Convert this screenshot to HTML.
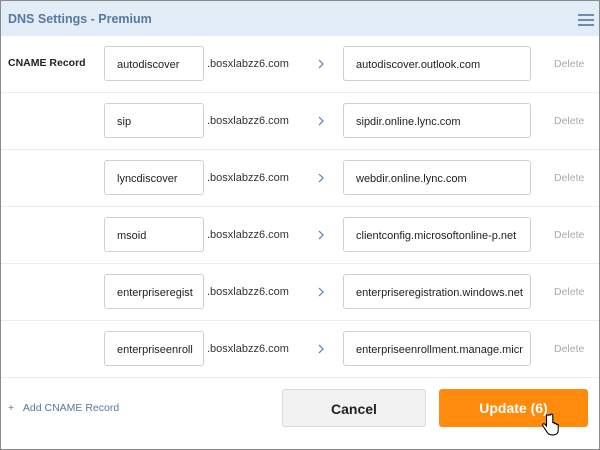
<!DOCTYPE html>
<html><head><style>
body{margin:0;width:600px;height:450px;overflow:hidden;font-family:"Liberation Sans",Arial,sans-serif;background:#fff}
.frame{position:absolute;left:0;top:0;width:598px;height:448px;border:1px solid #8a8a8a;background:#fff}
.hdr{position:absolute;left:0;top:0;width:598px;height:35px;background:#e3edf8;}
.hdr span{position:absolute;left:7px;top:11px;font-size:12.5px;font-weight:bold;color:#5679a0}
.ham{position:absolute;left:577px;top:13px;width:16px}
.ham i{display:block;height:2px;background:#6d8cb0;margin-bottom:3px}
.row{position:absolute;left:0;width:598px;height:56px;border-bottom:1px solid #ececec}
.lbl{position:absolute;left:7px;top:21px;font-size:10.5px;font-weight:bold;color:#222}
.in{position:absolute;top:10px;height:35px;border:1px solid #d0d0d0;border-radius:3px;box-sizing:border-box;font-size:11px;color:#222;line-height:36px;padding:0 4px 0 12px;overflow:hidden;white-space:nowrap;background:#fff}
.a{left:103px;width:100px}
.b{left:342px;width:188px}
.suf{position:absolute;left:206px;top:22px;font-size:11px;color:#333}
.chev{position:absolute;left:317px;top:23px}
.del{position:absolute;left:553px;top:22px;font-size:10.5px;color:#aaa}
.btn{position:absolute;top:388px;height:38px;border-radius:3px;box-sizing:border-box;text-align:center;line-height:38px;font-size:14px;font-weight:bold}
</style></head><body>
<div class="frame">
<div class="hdr"><span>DNS Settings - Premium</span><div class="ham"><i></i><i></i><i></i></div></div>

<div class="row" style="top:35px"><div class="lbl">CNAME Record</div><div class="in a">autodiscover</div><div class="suf">.bosxlabzz6.com</div><svg class="chev" width="6" height="10"><path d="M1 1l4 4-4 4" fill="none" stroke="#5a7fa8" stroke-width="1.2"/></svg><div class="in b">autodiscover.outlook.com</div><div class="del">Delete</div></div>
<div class="row" style="top:92px"><div class="in a">sip</div><div class="suf">.bosxlabzz6.com</div><svg class="chev" width="6" height="10"><path d="M1 1l4 4-4 4" fill="none" stroke="#5a7fa8" stroke-width="1.2"/></svg><div class="in b">sipdir.online.lync.com</div><div class="del">Delete</div></div>
<div class="row" style="top:149px"><div class="in a">lyncdiscover</div><div class="suf">.bosxlabzz6.com</div><svg class="chev" width="6" height="10"><path d="M1 1l4 4-4 4" fill="none" stroke="#5a7fa8" stroke-width="1.2"/></svg><div class="in b">webdir.online.lync.com</div><div class="del">Delete</div></div>
<div class="row" style="top:206px"><div class="in a">msoid</div><div class="suf">.bosxlabzz6.com</div><svg class="chev" width="6" height="10"><path d="M1 1l4 4-4 4" fill="none" stroke="#5a7fa8" stroke-width="1.2"/></svg><div class="in b">clientconfig.microsoftonline-p.net</div><div class="del">Delete</div></div>
<div class="row" style="top:263px"><div class="in a">enterpriseregist</div><div class="suf">.bosxlabzz6.com</div><svg class="chev" width="6" height="10"><path d="M1 1l4 4-4 4" fill="none" stroke="#5a7fa8" stroke-width="1.2"/></svg><div class="in b">enterpriseregistration.windows.net</div><div class="del">Delete</div></div>
<div class="row" style="top:320px"><div class="in a">enterpriseenroll</div><div class="suf">.bosxlabzz6.com</div><svg class="chev" width="6" height="10"><path d="M1 1l4 4-4 4" fill="none" stroke="#5a7fa8" stroke-width="1.2"/></svg><div class="in b">enterpriseenrollment.manage.micr</div><div class="del">Delete</div></div>

<div style="position:absolute;left:7px;top:401px;font-size:10.5px;color:#5679a0">+&nbsp;&nbsp;&nbsp;Add CNAME Record</div>
<div class="btn" style="left:281px;width:144px;background:#f2f2f2;border:1px solid #ddd;color:#222">Cancel</div>
<div class="btn" style="left:438px;width:149px;background:#ff8a0b;color:#fff">Update (6)</div>
<svg style="position:absolute;left:541px;top:411px" width="18" height="26" viewBox="0 0 20 26"><path d="M5 2v12l-2-2c-1-1-3 0-2 2l4 6c1 2 3 4 6 4h2c3 0 5-2 5-5v-6c0-1-2-1-2 0v-1c0-1-2-1-2 0v-1c0-1-2-1-2 0V2c0-1.5-3-1.5-3 0z" fill="#fff" stroke="#000" stroke-width="1.2"/></svg>
</div>
</body></html>
